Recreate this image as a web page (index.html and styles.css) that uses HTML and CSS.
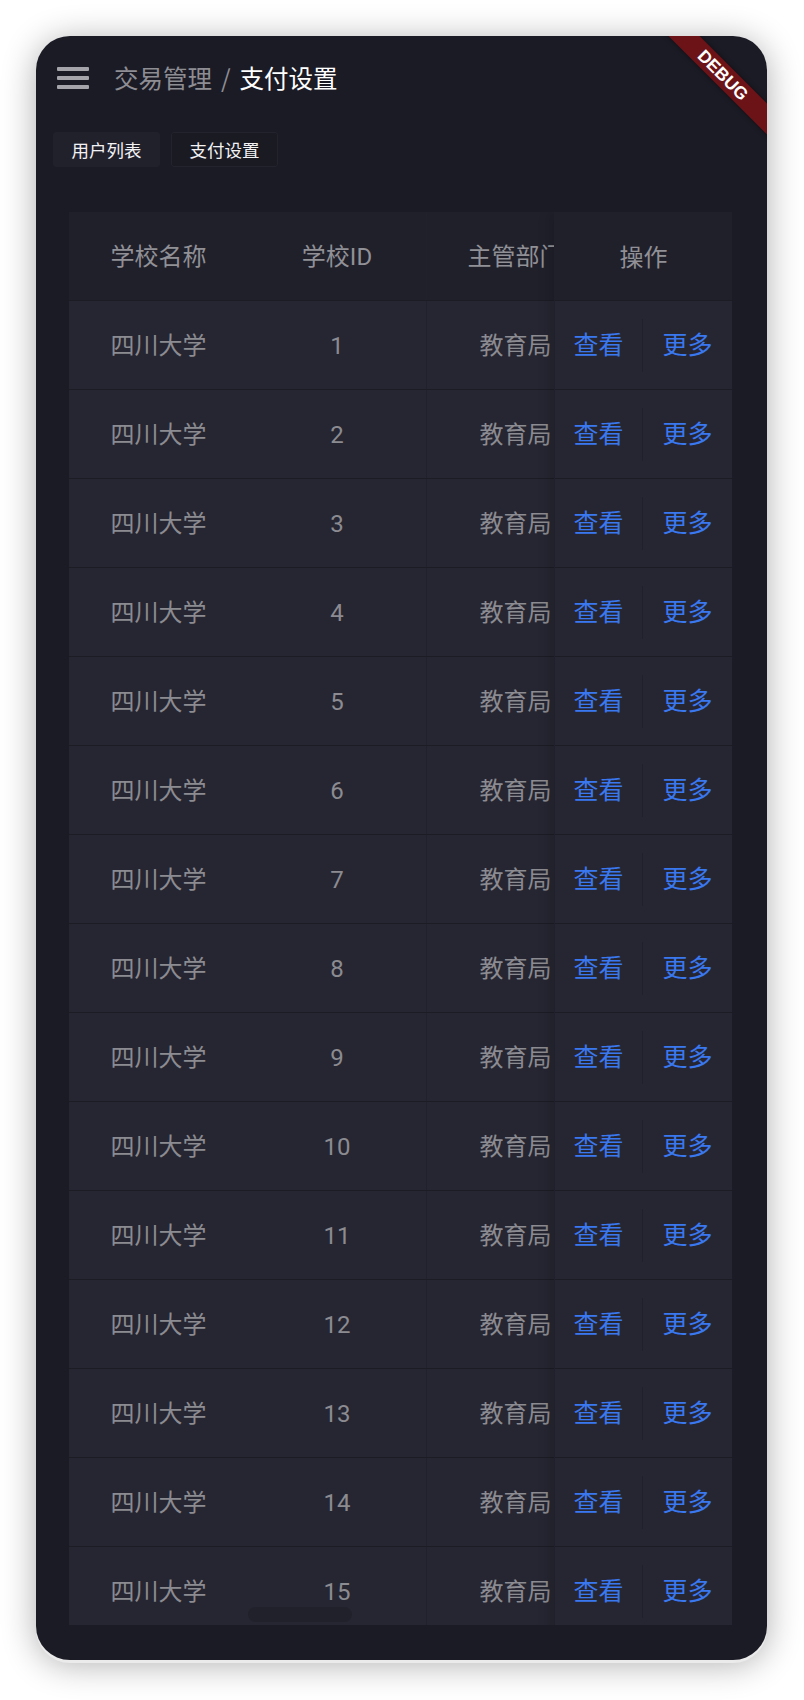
FILE: index.html
```html
<!DOCTYPE html>
<html lang="zh-CN">
<head>
<meta charset="utf-8">
<title>支付设置</title>
<link rel="stylesheet" href="styles.css">
</head>
<body>
<div class="frame">
  <div class="banner">DEBUG</div>
  <header class="topbar">
    <span class="menu"><i></i><i></i><i></i></span>
    <nav class="crumbs"><span class="crumb-parent">交易管理</span><span class="sep">/</span><span class="crumb-current">支付设置</span></nav>
  </header>
  <div class="tabs">
    <span class="tab tab-active">用户列表</span>
    <span class="tab">支付设置</span>
  </div>
  <div class="table-wrap">
    <div class="table">
      <div class="scroll-part">
        <div class="row head"><div class="cell">学校名称</div><div class="cell">学校ID</div><div class="cell c3">主管部门</div></div>
        <div class="row"><div class="cell">四川大学</div><div class="cell">1</div><div class="cell c3">教育局</div></div>
        <div class="row"><div class="cell">四川大学</div><div class="cell">2</div><div class="cell c3">教育局</div></div>
        <div class="row"><div class="cell">四川大学</div><div class="cell">3</div><div class="cell c3">教育局</div></div>
        <div class="row"><div class="cell">四川大学</div><div class="cell">4</div><div class="cell c3">教育局</div></div>
        <div class="row"><div class="cell">四川大学</div><div class="cell">5</div><div class="cell c3">教育局</div></div>
        <div class="row"><div class="cell">四川大学</div><div class="cell">6</div><div class="cell c3">教育局</div></div>
        <div class="row"><div class="cell">四川大学</div><div class="cell">7</div><div class="cell c3">教育局</div></div>
        <div class="row"><div class="cell">四川大学</div><div class="cell">8</div><div class="cell c3">教育局</div></div>
        <div class="row"><div class="cell">四川大学</div><div class="cell">9</div><div class="cell c3">教育局</div></div>
        <div class="row"><div class="cell">四川大学</div><div class="cell">10</div><div class="cell c3">教育局</div></div>
        <div class="row"><div class="cell">四川大学</div><div class="cell">11</div><div class="cell c3">教育局</div></div>
        <div class="row"><div class="cell">四川大学</div><div class="cell">12</div><div class="cell c3">教育局</div></div>
        <div class="row"><div class="cell">四川大学</div><div class="cell">13</div><div class="cell c3">教育局</div></div>
        <div class="row"><div class="cell">四川大学</div><div class="cell">14</div><div class="cell c3">教育局</div></div>
        <div class="row"><div class="cell">四川大学</div><div class="cell">15</div><div class="cell c3">教育局</div></div>
      </div>
      <div class="fixed-part">
        <div class="op-row head"><span class="op-title">操作</span></div>
        <div class="op-row"><a class="op">查看</a><a class="op op-more">更多</a></div>
        <div class="op-row"><a class="op">查看</a><a class="op op-more">更多</a></div>
        <div class="op-row"><a class="op">查看</a><a class="op op-more">更多</a></div>
        <div class="op-row"><a class="op">查看</a><a class="op op-more">更多</a></div>
        <div class="op-row"><a class="op">查看</a><a class="op op-more">更多</a></div>
        <div class="op-row"><a class="op">查看</a><a class="op op-more">更多</a></div>
        <div class="op-row"><a class="op">查看</a><a class="op op-more">更多</a></div>
        <div class="op-row"><a class="op">查看</a><a class="op op-more">更多</a></div>
        <div class="op-row"><a class="op">查看</a><a class="op op-more">更多</a></div>
        <div class="op-row"><a class="op">查看</a><a class="op op-more">更多</a></div>
        <div class="op-row"><a class="op">查看</a><a class="op op-more">更多</a></div>
        <div class="op-row"><a class="op">查看</a><a class="op op-more">更多</a></div>
        <div class="op-row"><a class="op">查看</a><a class="op op-more">更多</a></div>
        <div class="op-row"><a class="op">查看</a><a class="op op-more">更多</a></div>
        <div class="op-row"><a class="op">查看</a><a class="op op-more">更多</a></div>
      </div>
    </div>
    <div class="scroll-thumb"></div>
  </div>
</div>
</body>
</html>
```

FILE: styles.css
```css
html, body {
  margin: 0;
  padding: 0;
  background: #ffffff;
}
body {
  font-family: "Roboto", "Noto Sans CJK SC", sans-serif;
  width: 804px;
  height: 1700px;
  overflow: hidden;
}
.frame {
  position: relative;
  margin: 36px 0 0 36px;
  width: 731px;
  height: 1624px;
  border-radius: 34px;
  overflow: hidden;
  background: #1b1b25;
  box-shadow: 0 3px 0 #ebebeb, 0 4px 34px rgba(0, 0, 0, 0.32);
}
.banner {
  position: absolute;
  left: 607px;
  top: 28px;
  width: 160px;
  height: 22px;
  transform: rotate(45deg);
  background: #6c1318;
  box-shadow: 0 0 5px rgba(0, 0, 0, 0.45);
  color: #ffffff;
  font-family: "Liberation Sans", sans-serif;
  font-weight: 700;
  font-size: 17.5px;
  line-height: 22px;
  text-align: center;
}
.topbar {
  height: 84px;
  display: flex;
  align-items: center;
  padding-left: 21px;
}
.menu {
  display: flex;
  flex-direction: column;
  gap: 5px;
  width: 32px;
  margin-right: 25px;
}
.menu i {
  display: block;
  height: 4px;
  background: #a4a4aa;
  border-radius: 1px;
}
.crumbs {
  font-family: "Noto Sans CJK SC", sans-serif;
  font-size: 24.5px;
  line-height: 30px;
  color: #8d8d93;
  display: flex;
  align-items: center;
}
.sep {
  margin: 0 9px;
}
.crumb-current {
  color: #ffffff;
}
.tabs {
  display: flex;
  gap: 11px;
  margin: 12px 0 0 17px;
}
.tab {
  display: block;
  height: 35px;
  box-sizing: border-box;
  padding: 0 17.5px;
  border-radius: 3px;
  border: 1px solid #23232d;
  background: #1a1a23;
  font-family: "Noto Sans CJK SC", sans-serif;
  font-size: 17.5px;
  line-height: 33px;
  color: #f2f2f4;
}
.tab-active {
  background: #21212c;
  border-color: #21212c;
}
.table-wrap {
  position: relative;
  margin: 45px 0 0 33px;
  width: 663px;
  height: 1413px;
  overflow: hidden;
}
.table {
  display: flex;
}
.scroll-part {
  width: 485px;
  overflow: hidden;
  flex: none;
}
.row {
  display: grid;
  grid-template-columns: 179px 178px 178px;
  width: 535px;
  height: 89px;
  box-sizing: border-box;
  border-bottom: 1px solid #1c1c25;
  background: #262632;
}
.row.head {
  background: #20202b;
}
.cell {
  display: flex;
  align-items: center;
  justify-content: center;
  white-space: nowrap;
  padding-top: 2px;
  font-size: 24px;
  line-height: 30px;
  color: #8b8b91;
}
.head .cell {
  color: #909096;
}
.c3 {
  border-left: 1px solid #21212b;
}
.fixed-part {
  width: 178px;
  flex: none;
  border-left: 1px solid #20202a;
  box-sizing: border-box;
  box-shadow: -6px 0 10px rgba(0, 0, 0, 0.12);
  position: relative;
}
.op-row {
  height: 89px;
  box-sizing: border-box;
  border-bottom: 1px solid #1c1c25;
  background: #262632;
  display: grid;
  grid-template-columns: 87px 90px;
  align-items: center;
}
.op-row.head {
  background: #20202b;
  display: flex;
  justify-content: center;
}
.op-title {
  font-family: "Noto Sans CJK SC", sans-serif;
  font-size: 24px;
  line-height: 30px;
  color: #909096;
}
.op {
  display: flex;
  align-items: center;
  justify-content: center;
  box-sizing: border-box;
  padding-bottom: 4px;
  font-family: "Noto Sans CJK SC", sans-serif;
  font-size: 25px;
  line-height: 30px;
  color: #3a78ef;
  height: 53px;
}
.op-more {
  border-left: 1px solid #20202a;
}
.scroll-thumb {
  position: absolute;
  left: 179px;
  bottom: 3px;
  width: 104px;
  height: 15px;
  border-radius: 8px;
  background: #21212b;
}
```
